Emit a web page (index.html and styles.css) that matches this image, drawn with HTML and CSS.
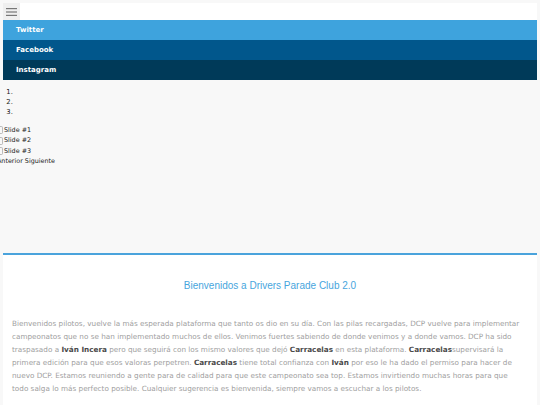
FILE: index.html
```html
<!DOCTYPE html>
<html lang="es">
<head>
<meta charset="utf-8">
<link rel="stylesheet" href="styles.css">
</head>
<body>
<div class="page">
  <header class="topbar">
    <button class="burger" aria-label="menu">
      <svg width="11" height="8" viewBox="0 0 11 8"><rect x="0" y="0" width="11" height="1.2" fill="#777"/><rect x="0" y="3.4" width="11" height="1.2" fill="#777"/><rect x="0" y="6.8" width="11" height="1.2" fill="#777"/></svg>
    </button>
  </header>
  <nav class="menu">
    <a class="item tw">Twitter</a>
    <a class="item fb">Facebook</a>
    <a class="item ig">Instagram</a>
  </nav>
  <ol class="dots"><li></li><li></li><li></li></ol>
  <div class="slides">
    <div class="slide"><span class="broken"></span>Slide #1</div>
    <div class="slide"><span class="broken"></span>Slide #2</div>
    <div class="slide"><span class="broken"></span>Slide #3</div>
    <div class="ctrl">Anterior Siguiente</div>
  </div>
  <section class="card">
    <h2 class="title">Bienvenidos a Drivers Parade Club 2.0</h2>
    <p class="text">Bienvenidos pilotos, vuelve la más esperada plataforma que tanto os dio en su día. Con las pilas recargadas, DCP vuelve para implementar campeonatos que no se han implementado muchos de ellos. Venimos fuertes sabiendo de donde venimos y a donde vamos. DCP ha sido traspasado a <b>Iván Incera</b> pero que seguirá con los mismo valores que dejó <b>Carracelas</b> en esta plataforma. <b>Carracelas</b>supervisará la primera edición para que esos valoras perpetren. <b>Carracelas</b> tiene total confianza con <b>Iván</b> por eso le ha dado el permiso para hacer de nuevo DCP. Estamos reuniendo a gente para de calidad para que este campeonato sea top. Estamos invirtiendo muchas horas para que todo salga lo más perfecto posible. Cualquier sugerencia es bienvenida, siempre vamos a escuchar a los pilotos.</p>
  </section>
</div>
</body>
</html>
```
FILE: styles.css
```css
html, body { margin: 0; padding: 0; }
body {
  background: #f8f8f8;
  font-family: "DejaVu Sans", sans-serif;
  color: #222;
  overflow: hidden;
  height: 405px;
}
.page { padding: 3px 3px 0 3px; }
.topbar { background: #fff; height: 17px; display: flex; }
.burger {
  width: 17px; height: 17px; border: 0; padding: 0; margin: 0;
  background: #efefef; display: flex; align-items: center; justify-content: center;
}
.menu { display: flex; flex-direction: column; }
.item {
  height: 20px; display: flex; align-items: center;
  padding-left: 13px; color: #fff; font-size: 7px; font-weight: bold;
}
.tw { background: #3ea3dd; }
.fb { background: #01578c; }
.ig { background: #003a59; }
.dots { margin: 7px 0 0 0; padding-left: 12px; font-size: 6.8px; line-height: 10px; }
.dots li { height: 10px; }
.slides { margin: 8px 0 0 -3px; font-size: 6.4px; line-height: 10.4px; height: 128px; }
.slide { display: flex; align-items: center; }
.broken { width: 2px; height: 6px; border: 1px solid #bbb; border-left: 0; border-radius: 0 2px 2px 0; margin-right: 1px; }
.ctrl { margin-left: -3px; }
.card { background: #fff; border-top: 2px solid #4aa3dc; height: 151px; overflow: hidden; }
.title {
  margin: 0; padding-top: 24px; text-align: center;
  font-family: "Liberation Sans", Arial, sans-serif; font-weight: normal;
  font-size: 10px; color: #47a5dd; line-height: 14px;
}
.text {
  margin: 24px 0 0 0; padding: 0 16px 0 9px;
  font-size: 7.25px; line-height: 13px; color: #a0a0a0;
}
.text b { color: #4a4a4a; }
```
